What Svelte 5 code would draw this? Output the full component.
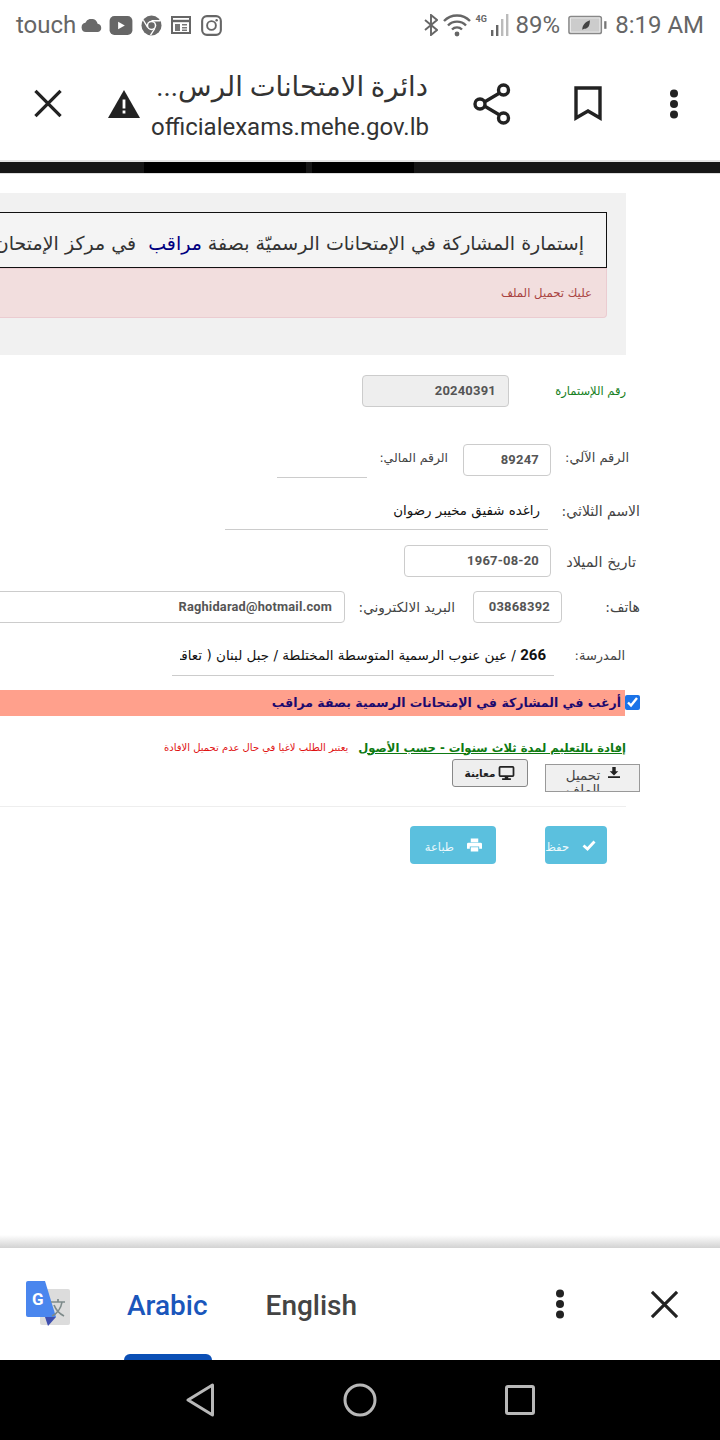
<script lang="ts">
  const title = "إستمارة المشاركة في الإمتحانات الرسميّة بصفة";
</script>

<div class="phone">
  <header class="status">
    <div class="status-left">
      <span class="touch">touch</span>
      <svg class="ic-cloud" viewBox="0 0 24 14"><path d="M6 14a5 5 0 0 1-.6-9.9A7 7 0 0 1 18.6 5 4.6 4.6 0 0 1 19 14z" fill="#6a6a6a"/></svg>
      <svg class="ic-yt" viewBox="0 0 24 20"><rect width="24" height="20" rx="5" fill="#666"/><path d="M9 6l7 4-7 4z" fill="#fff"/></svg>
      <svg class="ic-chrome" viewBox="0 0 22 22"><circle cx="11" cy="11" r="10.5" fill="#6a6a6a"/><circle cx="11" cy="11" r="5" fill="#fff"/><circle cx="11" cy="11" r="3.4" fill="#6a6a6a"/><path d="M11 6h9M7 13L2.5 5.5M14.5 14L10 21" stroke="#fff" stroke-width="1.4" fill="none"/></svg>
      <svg class="ic-cal" viewBox="0 0 20 18"><rect x="1" y="1" width="18" height="16" fill="none" stroke="#666" stroke-width="2"/><path d="M1 5h18" stroke="#666" stroke-width="2.4"/><path d="M4 8h5v7H4zM11 8h5v1.5h-5zM11 11h5v1.5h-5zM11 13.6h5v1.5h-5z" fill="#777"/></svg>
      <svg class="ic-insta" viewBox="0 0 22 22"><rect x="1.2" y="1.2" width="19.6" height="19.6" rx="5" fill="none" stroke="#666" stroke-width="2.2"/><circle cx="11" cy="11" r="4.6" fill="none" stroke="#666" stroke-width="2"/><circle cx="16.4" cy="5.6" r="1.3" fill="#666"/></svg>
    </div>
    <div class="status-right">
      <svg class="ic-bt" viewBox="0 0 14 22"><path d="M1 6l12 10-6 5V1l6 5L1 16" fill="none" stroke="#666" stroke-width="1.9"/></svg>
      <svg class="ic-wifi" viewBox="0 0 28 24"><path d="M1 8a18 18 0 0 1 26 0M5 12.5a12.5 12.5 0 0 1 18 0M9 16.5a7 7 0 0 1 10 0" fill="none" stroke="#666" stroke-width="2.4"/><circle cx="14" cy="21" r="2.4" fill="#666"/></svg>
      <div class="net">
        <span class="four-g">4G</span>
        <svg class="ic-bars" viewBox="0 0 20 22"><path d="M1 16h2.4v6H1zM6 11h2.4v11H6z" fill="#666"/><path d="M11 5h2.4v17H11zM16 0h2.4v22H16z" fill="#bbb"/></svg>
      </div>
      <span class="pct">89%</span>
      <svg class="ic-batt" viewBox="0 0 42 20"><rect x="1" y="1" width="34" height="18" rx="2" fill="#eee" stroke="#888" stroke-width="1.6"/><rect x="3" y="3" width="30" height="14" fill="#ccc"/><path d="M15 15c0-5 3-8 8-10 0 6-2 9-6 9z" fill="#444"/><rect x="38" y="6" width="2.4" height="8" fill="#777"/></svg>
      <span class="clock">8:19 AM</span>
    </div>
  </header>

  <div class="toolbar">
    <svg class="ic-close" viewBox="0 0 30 30"><path d="M2 2l26 26M28 2L2 28" stroke="#222" stroke-width="3.4" fill="none"/></svg>
    <svg class="ic-warn" viewBox="0 0 32 28"><path d="M16 0l16 28H0z" fill="#222"/><path d="M14.6 9.5h2.8v9h-2.8zM14.6 20.5h2.8v3h-2.8z" fill="#fff"/></svg>
    <div class="page-id">
      <div class="page-title" dir="rtl">دائرة الامتحانات الرس...</div>
      <div class="page-url">officialexams.mehe.gov.lb</div>
    </div>
    <svg class="ic-share" viewBox="0 0 38 42"><path d="M30 8L8 21l22 13" fill="none" stroke="#222" stroke-width="3.4"/><circle cx="30.500" cy="7" r="5" fill="#fff" stroke="#222" stroke-width="3.4"/><circle cx="7" cy="21" r="5" fill="#fff" stroke="#222" stroke-width="3.4"/><circle cx="30.500" cy="35" r="5" fill="#fff" stroke="#222" stroke-width="3.4"/></svg>
    <svg class="ic-mark" viewBox="0 0 28 35"><path d="M2 2h24v30l-12-7-12 7z" fill="none" stroke="#222" stroke-width="3.4"/></svg>
    <svg class="ic-dots" viewBox="0 0 10 30"><circle cx="5" cy="4.500" r="4" fill="#222"/><circle cx="5" cy="15" r="4" fill="#222"/><circle cx="5" cy="25.500" r="4" fill="#222"/></svg>
  </div>

  <div class="page-strip"><span class="seg-a"></span><span class="seg-b"></span></div>

  <main class="content">
    <section class="panel" dir="rtl">
      <h1 class="heading">{title} <b>مراقب</b>&nbsp; في مركز الإمتحان</h1>
      <div class="alert">عليك تحميل الملف</div>
    </section>

    <form class="form" dir="rtl">
      <div class="row r1">
        <span class="lbl green">رقم اللإستمارة</span>
        <div class="input grey">20240391</div>
      </div>

      <div class="row r2">
        <span class="lbl">الرقم الآلي:</span>
        <div class="input">89247</div>
        <span class="lbl pad">الرقم المالي:</span>
        <div class="line"></div>
      </div>

      <div class="row r3">
        <span class="lbl">الاسم الثلاثي:</span>
        <div class="line name">راغده شفيق مخيبر رضوان</div>
      </div>

      <div class="row r4">
        <span class="lbl">تاريخ الميلاد</span>
        <div class="input">1967-08-20</div>
      </div>

      <div class="row r5">
        <span class="lbl">هاتف:</span>
        <div class="input">03868392</div>
        <span class="lbl pad">البريد الالكتروني:</span>
        <div class="input email">Raghidarad@hotmail.com</div>
      </div>

      <div class="row r6">
        <span class="lbl">المدرسة:</span>
        <div class="line school"><span class="clip"><b>266</b> / عين عنوب الرسمية المتوسطة المختلطة / جبل لبنان ( تعاقد</span></div>
      </div>

      <label class="wish">
        <input type="checkbox" checked />
        <span class="wish-text">أرغب في المشاركة في الإمتحانات الرسمية بصفة مراقب</span>
      </label>

      <div class="proof">
        <a class="proof-link" href="#top">إفادة بالتعليم لمدة ثلاث سنوات - حسب الأصول</a>
        <span class="proof-note">يعتبر الطلب لاغيا في حال عدم تحميل الافادة</span>
      </div>

      <div class="files">
        <button type="button" class="btn-upload">
          <svg class="ic-down" viewBox="0 0 14 13"><path d="M5 0h4v5h3L7 10 2 5h3zM0 11h14v2H0z" fill="#222"/></svg>
          <span class="upload-text">تحميل الملف</span>
        </button>
        <button type="button" class="btn-preview">
          <svg class="ic-monitor" viewBox="0 0 18 16"><rect x="1" y="1" width="16" height="10.500" rx="1" fill="none" stroke="#222" stroke-width="2"/><path d="M7 12h4v2h3v2H4v-2h3z" fill="#222"/></svg>
          معاينة
        </button>
      </div>

      <hr class="rule" />

      <div class="actions">
        <button type="button" class="btn-info save">
          <svg class="ic-check" viewBox="0 0 14 11"><path d="M1.500 5.500l4 3.500 7-7.500" fill="none" stroke="#fff" stroke-width="2.800"/></svg>
          <span>حفظ</span>
        </button>
        <button type="button" class="btn-info print">
          <svg class="ic-print" viewBox="0 0 16 14"><path d="M4 0h8v4H4zM1.500 4.500h13A1.500 1.500 0 0 1 16 6v5h-3V8.500H3V11H0V6a1.500 1.500 0 0 1 1.500-1.500zM4 9.500h8V14H4z" fill="#fff"/></svg>
          <span>طباعة</span>
        </button>
      </div>
    </form>
  </main>

  <div class="sheet-shadow"></div>
  <div class="translate">
    <svg class="gt-logo" viewBox="0 0 44 45">
      <rect x="14" y="8" width="30" height="36" rx="2" fill="#dcdcdc"/>
      <path d="M2 0h17l11 36H2a2 2 0 0 1-2-2V2a2 2 0 0 1 2-2z" fill="#4a86ee"/>
      <path d="M19 36h11l-8 9z" fill="#3e4fb0"/>
      <path d="M25 21h14M32 18v3M36 21c-1 7-6 12-10 14M28 24c2 5 6 9 10 11" fill="none" stroke="#7d8a8a" stroke-width="1.700"/>
      <text x="6" y="24" class="gt-g">G</text>
    </svg>
    <span class="tab active">Arabic<i class="tab-bar"></i></span>
    <span class="tab">English</span>
    <svg class="ic-dots tr-dots" viewBox="0 0 10 30"><circle cx="5" cy="4.500" r="4" fill="#222"/><circle cx="5" cy="15" r="4" fill="#222"/><circle cx="5" cy="25.500" r="4" fill="#222"/></svg>
    <svg class="ic-close tr-close" viewBox="0 0 30 30"><path d="M2 2l26 26M28 2L2 28" stroke="#222" stroke-width="3.200" fill="none"/></svg>
  </div>

  <nav class="nav">
    <svg class="nav-back" viewBox="0 0 30 34"><path d="M27.500 2v30L3 17z" fill="none" stroke="#b8b8b8" stroke-width="3" stroke-linejoin="round"/></svg>
    <svg class="nav-home" viewBox="0 0 34 34"><circle cx="17" cy="17" r="15" fill="none" stroke="#b8b8b8" stroke-width="3"/></svg>
    <svg class="nav-recent" viewBox="0 0 30 30"><rect x="1.500" y="1.500" width="27" height="27" rx="1.500" fill="none" stroke="#b8b8b8" stroke-width="3"/></svg>
  </nav>
</div>

<style>
  :global(body) { margin: 0; background: #fff; }
  .phone {
    width: 720px;
    height: 1440px;
    display: flex;
    flex-direction: column;
    overflow: hidden;
    font-family: Roboto, "DejaVu Sans", sans-serif;
    color: #333;
  }
  svg { display: block; flex: none; }

  /* status bar */
  .status {
    height: 50px;
    flex: none;
    display: flex;
    justify-content: space-between;
    align-items: center;
    padding: 0 16px;
    color: #666;
    font-size: 24px;
  }
  .status-left, .status-right { display: flex; align-items: center; }
  .ic-cloud { width: 23px; height: 13px; margin: 0 6px 0 4px; }
  .ic-yt { width: 24px; height: 19px; margin-right: 8px; }
  .ic-chrome { width: 21px; height: 21px; margin-right: 9px; }
  .ic-cal { width: 20px; height: 18px; margin-right: 10px; }
  .ic-insta { width: 21px; height: 21px; }
  .ic-bt { width: 14px; height: 22px; margin-right: 5px; }
  .ic-wifi { width: 28px; height: 24px; margin-right: 5px; }
  .net { display: flex; align-items: flex-start; }
  .four-g { font-size: 9px; font-weight: 700; line-height: 10px; width: 14px; }
  .ic-bars { width: 20px; height: 22px; margin-right: 6px; }
  .ic-batt { width: 40px; height: 20px; margin: 0 7px 0 8px; }

  /* browser toolbar */
  .toolbar {
    box-sizing: border-box;
    height: 110px;
    flex: none;
    display: flex;
    align-items: center;
    padding: 0 0 3px 33px;
  }
  .toolbar .ic-close { width: 30px; height: 29px; margin-right: 45px; }
  .ic-warn { width: 32px; height: 28px; margin-right: 11px; }
  .page-id { width: 277px; margin: 11px 45px 0 0; }
  .page-title { font-size: 27.500px; line-height: 36px; color: #333; white-space: nowrap; text-align: right; }
  .page-url { font-size: 24px; line-height: 44px; color: #333; white-space: nowrap; text-align: right; }
  .ic-share { width: 38px; height: 42px; margin-right: 63px; }
  .ic-mark { width: 28px; height: 35px; margin-right: 67px; }
  .ic-dots { width: 10px; height: 30px; }

  .page-strip {
    height: 11px;
    flex: none;
    border-top: 2px solid #e4e4e4;
    border-bottom: 1px solid #ddd;
    background: #161616;
    display: flex;
    padding-left: 144px;
  }
  .seg-a { width: 162px; background: #000; }
  .seg-b { width: 102px; margin-left: 6px; background: #000; }

  /* page */
  .content { flex: 1; min-height: 0; overflow: hidden; padding-top: 19px; }
  .panel {
    box-sizing: border-box;
    width: 626px;
    height: 162px;
    background: #f1f1f1;
    padding: 19px 19px 0 0;
    font-family: "DejaVu Sans", sans-serif;
  }
  .heading {
    box-sizing: border-box;
    margin: 0;
    height: 56px;
    border: 1px solid #111;
    border-left: 0;
    background: #f4f4f4;
    padding: 7px 22px 0 0;
    font-size: 19px;
    font-weight: 400;
    line-height: 47px;
    color: #333;
    white-space: nowrap;
    overflow: hidden;
  }
  .heading b { font-weight: 400; color: #000080; }
  .alert {
    box-sizing: border-box;
    height: 50px;
    background: #f2dede;
    border: 1px solid #ebccd1;
    border-left: 0;
    border-radius: 0 0 4px 0;
    padding-right: 14px;
    color: #a94442;
    font-size: 11.700px;
    line-height: 49px;
  }

  .form {
    width: 640px;
    padding-top: 20px;
    font-family: "DejaVu Sans", sans-serif;
    font-size: 12px;
    overflow: hidden;
  }
  .row { display: grid; align-items: center; justify-content: start; }
  .lbl { color: #444; font-size: 13px; white-space: nowrap; }
  .lbl.pad { padding-right: 15px; font-size: 12.400px; }
  .lbl.green { color: #15801d; font-size: 11.500px; }
  .input {
    box-sizing: border-box;
    height: 32px;
    background: #fff;
    border: 1px solid #ccc;
    border-radius: 4px;
    padding: 0 11px;
    font-family: Roboto, sans-serif;
    font-size: 13px;
    font-weight: 700;
    letter-spacing: 0.200px;
    line-height: 30px;
    color: #555;
    white-space: nowrap;
  }
  .grey { background: #eee; padding: 0 12px; }
  .line { border-bottom: 1px solid #ccc; box-sizing: border-box; }

  .r1 { grid-template-columns: 117px 147px; padding-right: 14px; }
  .r2 { grid-template-columns: 78px 88px 96px 90px; padding-right: 11px; margin-top: 34px; }
  .r2 .line { height: 37px; }
  .r2 .lbl { margin-bottom: 4px; }
  .r3 { grid-template-columns: 92px 323px; margin-top: 19px; }
  .r3 .lbl { font-size: 14px; margin-bottom: 5px; }
  .name {
    height: 33px;
    padding-right: 8px;
    color: #111;
    font-size: 13.400px;
    line-height: 28px;
  }
  .r4 { grid-template-columns: 85px 147px; padding-right: 4px; margin-top: 15px; }
  .r4 .lbl { font-size: 14.500px; padding-top: 2px; }
  .r5 { grid-template-columns: 78px 89px 128px 350px; margin-top: 14px; }
  .r5 .lbl { font-size: 14px; }
  .r5 .lbl.pad { padding-right: 18px; font-size: 13.700px; }
  .input.email { font-size: 12.800px; padding: 0 12px; }
  .r6 { grid-template-columns: 71px 382px; padding-right: 15px; margin-top: 20px; }
  .r6 .lbl { margin-bottom: 8px; }
  .school { height: 33px; padding: 0 8px; line-height: 25px; color: #111; font-size: 13.500px; }
  .school b { font-family: Roboto, sans-serif; font-size: 15px; }
  .clip { display: block; overflow: hidden; white-space: nowrap; }

  .wish { display: flex; align-items: flex-start; margin-top: 14px; }
  .wish input { width: 15px; height: 15px; margin: 5px 0 0; accent-color: #1a73e8; flex: none; }
  .wish-text {
    flex: 1;
    height: 26px;
    background: #ffa08c;
    padding-right: 4px;
    color: #1c0a6e;
    font-size: 12.500px;
    font-weight: 700;
    line-height: 26px;
    white-space: nowrap;
    overflow: hidden;
  }

  .proof {
    display: flex;
    align-items: center;
    height: 22px;
    margin-top: 20px;
    padding-right: 14px;
    white-space: nowrap;
  }
  .proof-link { color: #0e7a12; font-size: 11.600px; font-weight: 700; text-decoration: underline; padding-top: 1px; }
  .proof-note { color: #e01212; font-size: 10px; margin-right: 10px; }

  .files { display: flex; align-items: flex-start; height: 33px; margin-top: 1px; }
  .btn-upload {
    box-sizing: border-box;
    width: 95px;
    height: 28px;
    margin-top: 5px;
    padding: 0 19px 0 0;
    display: flex;
    align-items: flex-start;
    background: #f0f0f0;
    border: 1px solid #999;
    color: #444;
    font: 13.500px/14px "DejaVu Sans", sans-serif;
    overflow: hidden;
    direction: rtl;
  }
  .ic-down { width: 12px; height: 13px; margin: 1px 0 0 3px; }
  .upload-text { width: 44px; margin-top: 3px; text-align: center; }
  .btn-preview {
    box-sizing: border-box;
    width: 76px;
    height: 28px;
    margin-right: 17px;
    padding: 0;
    display: flex;
    align-items: center;
    justify-content: center;
    gap: 3px;
    background: #eee;
    border: 1px solid #888;
    border-radius: 3px;
    color: #222;
    font: 700 10.500px "DejaVu Sans", sans-serif;
  }
  .ic-monitor { width: 17px; height: 14px; }

  .rule { width: 626px; height: 1px; border: 0; margin: 14px 14px 0 0; background: #eee; }

  .actions { display: flex; margin-top: 19px; padding-right: 33px; }
  .btn-info {
    box-sizing: border-box;
    height: 38px;
    display: flex;
    align-items: center;
    background: #5bc0de;
    border: 0;
    border-radius: 4px;
    padding: 0;
    color: #eef9fc;
    font: 11.500px "DejaVu Sans", sans-serif;
    overflow: hidden;
  }
  .btn-info span { padding-top: 4px; }
  .save { width: 62px; padding-right: 11px; gap: 13px; }
  .print { width: 86px; margin-right: 49px; padding-right: 14px; gap: 13px; }
  .ic-check { width: 14px; height: 11px; }
  .ic-print { width: 15px; height: 14px; }
  .save span { white-space: nowrap; }

  /* translate sheet */
  .sheet-shadow {
    height: 13px;
    flex: none;
    background: linear-gradient(#fff, #d2d2d2);
  }
  .translate {
    height: 112px;
    flex: none;
    display: flex;
    align-items: center;
    box-sizing: border-box;
    padding: 0 0 0 26px;
    background: #fff;
  }
  .gt-logo { width: 44px; height: 45px; margin: 0 57px 1px 0; }
  .gt-g { font: 700 17px Roboto, sans-serif; fill: #fff; }
  .tab { font-size: 28px; font-weight: 500; color: #444; line-height: 115px; height: 112px; margin-right: 58px; position: relative; }
  .tab.active { color: #1a56bb; }
  .tab-bar {
    position: absolute;
    left: -3px;
    right: -4px;
    bottom: 0;
    height: 6px;
    border-radius: 6px 6px 0 0;
    background: #0b4fb5;
  }
  .tr-dots { margin-left: 140px; }
  .tr-close { width: 29px; height: 29px; margin-left: 85px; }

  .nav {
    height: 80px;
    flex: none;
    background: #000;
    display: flex;
    align-items: center;
    padding-left: 185px;
  }
  .nav-back { width: 30px; height: 34px; margin-right: 128px; }
  .nav-home { width: 34px; height: 34px; margin-right: 128px; }
  .nav-recent { width: 30px; height: 30px; }
</style>
